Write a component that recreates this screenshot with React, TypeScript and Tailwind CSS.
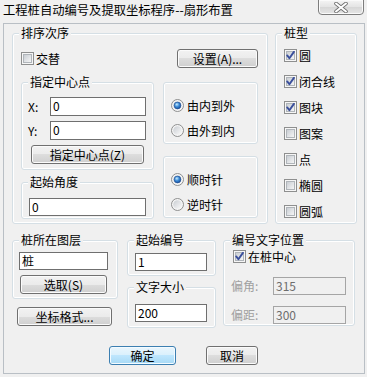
import React from "react";

const font = "font-['Noto_Sans_CJK_SC','Noto_Sans',sans-serif]";

function Checkbox({ checked }: { checked?: boolean }) {
  return (
    <svg width="13" height="13" viewBox="0 0 13 13" className="block shrink-0">
      <defs>
        <linearGradient id="cbg" x1="0" y1="0" x2="1" y2="1">
          <stop offset="0" stopColor="#c6cbd1" />
          <stop offset="1" stopColor="#f8f8f8" />
        </linearGradient>
      </defs>
      <rect x="0.5" y="0.5" width="12" height="12" fill="#f6f6f6" stroke="#8e8f8f" />
      <rect x="2.5" y="2.5" width="8" height="8" fill="url(#cbg)" stroke="#b0b5ba" />
      {checked && (
        <path d="M3.2 6.4 L5.4 9.3 L9.9 2.9" fill="none" stroke="#3a4f9c" strokeWidth="1.9" strokeLinecap="round" strokeLinejoin="round" />
      )}
    </svg>
  );
}

function Radio({ checked }: { checked?: boolean }) {
  return (
    <svg width="13" height="13" viewBox="0 0 13 13" className="block shrink-0">
      <defs>
        <linearGradient id="rbg" x1="0" y1="0" x2="1" y2="1">
          <stop offset="0" stopColor="#c9cdd2" />
          <stop offset="1" stopColor="#fbfbfb" />
        </linearGradient>
        <radialGradient id="rdot" cx="0.4" cy="0.35" r="0.75">
          <stop offset="0" stopColor="#c8ecff" />
          <stop offset="0.45" stopColor="#3a8ad6" />
          <stop offset="1" stopColor="#12418f" />
        </radialGradient>
      </defs>
      <circle cx="6.5" cy="6.5" r="6" fill="#f5f5f5" stroke="#8e8f8f" />
      <circle cx="6.5" cy="6.5" r="4.3" fill="url(#rbg)" />
      {checked && <circle cx="6.5" cy="6.5" r="3.4" fill="url(#rdot)" stroke="#1b4a8e" strokeWidth="0.6" />}
    </svg>
  );
}

function Btn({ children, className = "", primary }: { children: React.ReactNode; className?: string; primary?: boolean }) {
  const look = primary
    ? "border-[#3c7fb1] bg-[linear-gradient(#eaf6fd,#d9f0fc_50%,#bee6fd_50%,#a7d9f5)] shadow-[inset_0_0_0_1px_#f4fbff]"
    : "border-[#707070] bg-[linear-gradient(#f2f2f2,#ebebeb_50%,#dddddd_50%,#cfcfcf)] shadow-[inset_0_0_0_1px_#fbfbfb]";
  return (
    <div className={`h-[19px] flex items-center justify-center border rounded-[3px] whitespace-nowrap ${look} ${className}`}>
      {children}
    </div>
  );
}

function Field({ value, disabled, className = "" }: { value: string; disabled?: boolean; className?: string }) {
  const look = disabled
    ? "border-[#a5a5a5] bg-[#f0f0f0] text-[#6d6d6d]"
    : "border-[#6f6f6f] bg-white text-black";
  return (
    <div className={`h-[18px] border pl-[2px] leading-[16px] whitespace-nowrap ${look} ${className}`}>{value}</div>
  );
}

function Group({ label, className = "", children }: { label?: string; className?: string; children?: React.ReactNode }) {
  return (
    <div className={`border border-[#d5dfe5] rounded-[3px] shadow-[inset_0_0_0_1px_#ffffff] ${className}`}>
      {label ? (
        <div className="-mt-[8px] ml-[6px] px-[2px] w-fit h-[14px] leading-[14px] bg-[#f0f0f0] whitespace-nowrap">{label}</div>
      ) : null}
      {children}
    </div>
  );
}

function CheckRow({ label, checked, className = "" }: { label: string; checked?: boolean; className?: string }) {
  return (
    <div className={`h-[13px] flex items-center gap-[2px] whitespace-nowrap ${className}`}>
      <Checkbox checked={checked} />
      <span>{label}</span>
    </div>
  );
}

function RadioRow({ label, checked }: { label: string; checked?: boolean }) {
  return (
    <div className="h-[13px] flex items-center gap-[3px] pl-[7px] whitespace-nowrap">
      <Radio checked={checked} />
      <span>{label}</span>
    </div>
  );
}

export default function App() {
  return (
    <div className={`w-[367px] h-[377px] bg-[#f0f0f0] text-[12px] leading-[14px] text-black overflow-hidden ${font}`}>
      {/* title bar */}
      <div className="h-[23px] flex items-start justify-between">
        <div className="mt-[3px] ml-[3px] whitespace-nowrap text-[12.3px]">工程桩自动编号及提取坐标程序--扇形布置</div>
        <div className="w-[46px] h-[16px] -mt-px mr-[3px] border border-[#7d7d7d] rounded-b-[4px] bg-[linear-gradient(#f4f4f4,#e4e4e4_50%,#d6d6d6_50%,#e6e6e6)] shadow-[inset_0_0_0_1px_#fafafa] flex items-center justify-center">
          <svg width="14" height="11" viewBox="0 0 14 11">
            <path d="M2 1.5 L12 9.5 M12 1.5 L2 9.5" stroke="#6e6e6e" strokeWidth="3.6" strokeLinecap="round" />
            <path d="M2 1.5 L12 9.5 M12 1.5 L2 9.5" stroke="#ffffff" strokeWidth="2" strokeLinecap="round" />
          </svg>
        </div>
      </div>

      {/* client area */}
      <div className="ml-[3px] w-[362px] h-[351px] border border-[#b9bfc5]">
        {/* top section */}
        <div className="mt-[9px] pl-[8px] flex items-start">
          <Group label="排序次序" className="w-[256px] h-[191px]">
            <div className="mt-[9px] h-[19px] pl-[8px] pr-[9px] flex items-center justify-between">
              <CheckRow label="交替" />
              <Btn className="w-[81px]">设置(A)...</Btn>
            </div>
            <div className="mt-[14px] pl-[8px] flex items-start">
              <div className="w-[133px] flex flex-col">
                <Group label="指定中心点" className="h-[88px]">
                  <div className="mt-[8px] h-[19px] flex items-center">
                    <div className="w-[28px] pl-[6px]">X:</div>
                    <Field value="0" className="w-[96px] h-[19px]" />
                  </div>
                  <div className="mt-[5px] h-[19px] flex items-center">
                    <div className="w-[28px] pl-[6px]">Y:</div>
                    <Field value="0" className="w-[96px] h-[19px]" />
                  </div>
                  <Btn className="mt-[5px] ml-[9px] w-[113px]">指定中心点(Z)</Btn>
                </Group>
                <Group label="起始角度" className="mt-[12px] h-[37px]">
                  <Field value="0" className="mt-[9px] ml-[7px] w-[117px]" />
                </Group>
              </div>
              <div className="ml-[9px] w-[95px] flex flex-col">
                <Group className="h-[62px]">
                  <div className="pt-[16px] flex flex-col gap-[12px]">
                    <RadioRow label="由内到外" checked />
                    <RadioRow label="由外到内" />
                  </div>
                </Group>
                <Group className="mt-[12px] h-[62px]">
                  <div className="pt-[16px] flex flex-col gap-[12px]">
                    <RadioRow label="顺时针" checked />
                    <RadioRow label="逆时针" />
                  </div>
                </Group>
              </div>
            </div>
          </Group>

          <Group label="桩型" className="ml-[7px] w-[82px] h-[191px]">
            <div className="mt-[9px] pl-[8px] flex flex-col gap-[13px]">
              <CheckRow label="圆" checked />
              <CheckRow label="闭合线" checked />
              <CheckRow label="图块" checked />
              <CheckRow label="图案" />
              <CheckRow label="点" />
              <CheckRow label="椭圆" />
              <CheckRow label="圆弧" />
            </div>
          </Group>
        </div>

        {/* bottom section */}
        <div className="mt-[16px] pl-[8px] flex items-start">
          <div className="w-[106px] flex flex-col">
            <Group label="桩所在图层" className="h-[59px]">
              <Field value="桩" className="mt-[5px] ml-[6px] w-[89px]" />
              <Btn className="mt-[5px] ml-[7px] w-[87px]">选取(S)</Btn>
            </Group>
            <Btn className="mt-[8px] ml-[5px] w-[95px]">坐标格式...</Btn>
          </div>

          <div className="ml-[9px] w-[89px] flex flex-col">
            <Group label="起始编号" className="h-[36px]">
              <Field value="1" className="mt-[6px] ml-[7px] w-[72px]" />
            </Group>
            <Group label="文字大小" className="mt-[11px] h-[41px]">
              <Field value="200" className="mt-[10px] ml-[7px] w-[72px]" />
            </Group>
          </div>

          <Group label="编号文字位置" className="ml-[7px] w-[132px] h-[86px]">
            <CheckRow label="在桩中心" checked className="mt-[3px] pl-[9px]" />
            <div className="mt-[14px] h-[18px] flex items-center">
              <div className="w-[49px] pl-[7px] text-[#a0a0a0]">偏角:</div>
              <Field value="315" disabled className="w-[73px]" />
            </div>
            <div className="mt-[11px] h-[18px] flex items-center">
              <div className="w-[49px] pl-[7px] text-[#a0a0a0]">偏距:</div>
              <Field value="300" disabled className="w-[73px]" />
            </div>
          </Group>
        </div>

        {/* buttons */}
        <div className="mt-[18px] pl-[105px] flex items-start">
          <Btn primary className="w-[67px]">确定</Btn>
          <Btn className="ml-[30px] w-[52px]">取消</Btn>
        </div>
      </div>
    </div>
  );
}
